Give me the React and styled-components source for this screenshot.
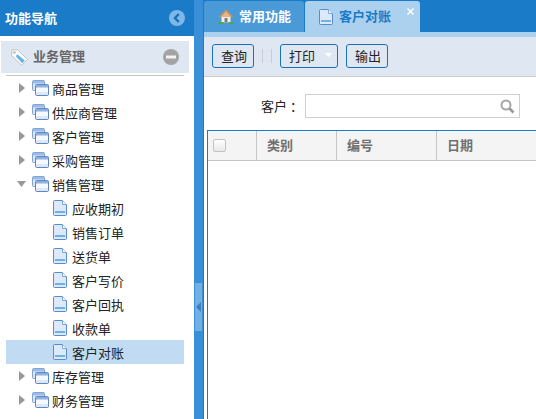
import React from 'react';
import styled, { createGlobalStyle } from 'styled-components';

const Global = createGlobalStyle`
  html, body { margin: 0; padding: 0; background: #fff; overflow: hidden; }
  * { box-sizing: border-box; }
  body { font-family: "Noto Sans CJK SC", "Liberation Sans", sans-serif; font-size: 13px; color: #222; }
`;

const Page = styled.div`display: flex; height: 100vh; overflow: hidden; background: #fff;`;
const Sidebar = styled.aside`width: 194px; flex: none; display: flex; flex-direction: column;`;
const SideHeader = styled.header`
  height: 36px; background: #1a7cc9; color: #fff; font-weight: 700; font-size: 13px;
  display: flex; align-items: center; justify-content: space-between; padding: 0 9px 0 5px;
`;
const Raised = styled.span`margin-bottom: 2px;`;
const Accordion = styled.div`
  margin: 5px 5px 0 1px; height: 32px; background: #dfe8f2; display: flex; align-items: center;
  padding: 0 10px 0 10px; color: #666; font-weight: 700; font-size: 13px;
`;
const AccordionTitle = styled.span`flex: 1; margin-left: 5px; margin-bottom: 3px;`;
const Tree = styled.ul`
  list-style: none; margin: 2px 10px 0 6px; padding: 0; border-top: 1px solid #c4c4c4;
`;
const Row = styled.li`
  height: 24px; display: flex; align-items: center; font-size: 13px; color: #222;
  padding-left: ${p => (p.$child ? 47 : 13)}px;
  background: ${p => (p.$selected ? '#c1dcf2' : 'transparent')};
`;
const Arrow = styled.span`
  width: 13px; flex: none; display: flex; align-items: center;
`;
const RowLabel = styled.span`margin-left: ${p => (p.$child ? 5 : 3)}px;`;
const Splitter = styled.div`
  width: 10px; flex: none; background: #3a90d8; border-right: 1px solid #1a7cc9;
  display: flex; align-items: center; justify-content: center; padding-left: 1px; padding-right: 1px;
`;
const SplitHandle = styled.div`
  width: 7px; height: 48px; margin-top: 195px; background: #74afe3; display: flex; align-items: center; justify-content: center;
`;
const Main = styled.main`flex: 1; min-width: 0; display: flex; flex-direction: column;`;
const TabBar = styled.div`
  height: 37px; flex: none; display: flex; align-items: flex-start; padding-top: 1px;
  background: linear-gradient(#1a7cc9 0 32px, #acd1ee 32px);
`;
const Tab = styled.div`
  position: relative; display: flex; align-items: center; font-weight: 700; font-size: 13px;
  width: ${p => p.$w}px; height: ${p => (p.$active ? 36 : 31)}px;
  padding-left: 14px; padding-bottom: ${p => (p.$active ? 5 : 0)}px;
  margin-left: ${p => (p.$active ? 1 : 0)}px;
  background: ${p => (p.$active ? '#acd1ee' : '#4a9ad8')};
  color: ${p => (p.$active ? '#1a7cc9' : '#fff')};
  border-radius: 3px 3px 0 0;
`;
const TabLabel = styled.span`margin-left: ${p => p.$ml}px; margin-bottom: 2px;`;
const CloseMark = styled.svg`position: absolute; top: 7px; right: 6px;`;
const Toolbar = styled.div`
  height: 40px; flex: none; background: #dfe8f2; border-bottom: 1px solid #cccccc;
  display: flex; align-items: center; padding: 0 0 1px 8px;
`;
const Button = styled.button`
  height: 24px; width: ${p => p.$w}px; margin-right: ${p => p.$mr || 0}px; font: inherit; font-size: 13px; color: #222;
  border: 1px solid #1b6fb6; border-radius: 3px; background: transparent; padding: 0 0 2px 8px;
  display: flex; align-items: center; gap: 10px;
`;
const Separator = styled.span`width: 1px; height: 14px; background: #c9ced3; margin-right: ${p => p.$mr}px;`;
const SearchRow = styled.div`
  height: 53px; flex: none; display: flex; align-items: flex-start; padding: 17px 16px 0 57px;
`;
const SearchLabel = styled.label`width: 44px; line-height: 23px; font-size: 13px; white-space: nowrap;`;
const SearchBox = styled.div`
  width: 215px; height: 24px; border: 1px solid #cfcfcf; display: flex; align-items: center; justify-content: flex-end; padding-right: 4px;
`;
const Grid = styled.div`
  flex: 1; margin-left: 3px; border-left: 1px solid #1a7cc9; border-top: 1px solid #1a7cc9;
`;
const GridHead = styled.div`
  height: 30px; background: #f4f4f4; border-bottom: 1px solid #c4c4c4; display: flex;
`;
const HeadCell = styled.div`
  width: ${p => p.$w}px; flex: none; border-right: 1px solid #c4c4c4; display: flex; align-items: center;
  padding: 0 0 2px ${p => p.$pl}px; font-weight: 700; font-size: 13px; color: #707070;
`;
const LastCell = styled(HeadCell)`border-right: 0; flex: 1;`;
const Check = styled.span`
  width: 13px; height: 13px; margin-top: 2px; border: 1px solid #c2c2c2; border-radius: 2px; background: linear-gradient(#fff, #e9e9e9);
`;

const Folder = () => (
  <svg width="17" height="16" viewBox="0 0 17 16">
    <rect x="0.5" y="0.5" width="12" height="10" rx="1" fill="#dce8f7" stroke="#7fa3d6" />
    <rect x="1" y="1" width="11" height="2.5" fill="#9dbbe6" />
    <rect x="3.5" y="4.5" width="13" height="11" rx="1" fill="#f6f9fd" stroke="#5f86c4" />
    <rect x="4" y="5" width="12" height="2.5" fill="#8fb0e2" />
    <rect x="4" y="12" width="12" height="3" fill="#dbe7f6" />
  </svg>
);
const Doc = () => (
  <svg width="14" height="16" viewBox="0 0 14 16">
    <path d="M.5 1.5a1 1 0 0 1 1-1h8l4 4v10a1 1 0 0 1-1 1h-11a1 1 0 0 1-1-1z" fill="#dbe9fb" stroke="#5b8cc9" />
    <path d="M9.5 .5v4h4" fill="#fff" stroke="#7ea6d8" />
    <rect x="2" y="11" width="10" height="2" fill="#6fb2e6" />
  </svg>
);
const Closed = () => (
  <svg width="6" height="10" viewBox="0 0 6 10"><path d="M0 0l6 5-6 5z" fill="#989898" /></svg>
);
const Open = () => (
  <svg width="9" height="6" viewBox="0 0 9 6" style={{ marginLeft: -2 }}><path d="M0 0h9L4.5 6z" fill="#989898" /></svg>
);

const items = [
  { t: '商品管理' }, { t: '供应商管理' }, { t: '客户管理' }, { t: '采购管理' },
  { t: '销售管理', open: true },
  { t: '应收期初', c: 1 }, { t: '销售订单', c: 1 }, { t: '送货单', c: 1 }, { t: '客户写价', c: 1 },
  { t: '客户回执', c: 1 }, { t: '收款单', c: 1 }, { t: '客户对账', c: 1, s: 1 },
  { t: '库存管理' }, { t: '财务管理' },
];

export default function App() {
  return (
    <Page>
      <Global />
      <Sidebar>
        <SideHeader>
          <Raised>功能导航</Raised>
          <svg width="16" height="16" viewBox="0 0 16 16">
            <circle cx="8" cy="8" r="8" fill="#7db8e8" />
            <path d="M9.8 4L6 8l3.8 4" fill="none" stroke="#1a6fb8" strokeWidth="2.4" />
          </svg>
        </SideHeader>
        <Accordion>
          <svg width="17" height="17" viewBox="0 0 17 17">
            <path d="M.8.8h5.7l10 9.5-6 6L.8 6.5z" fill="#fbfbfb" stroke="#c4c4c4" />
            <path d="M6.2 5.2l7.6 6.4-2.6 2.6-6.4-7z" fill="#62b4ea" />
            <circle cx="3.5" cy="3.5" r="1.2" fill="#b5b5b5" />
          </svg>
          <AccordionTitle>业务管理</AccordionTitle>
          <svg width="16" height="16" viewBox="0 0 16 16">
            <circle cx="8" cy="8" r="8" fill="#a3a3a3" />
            <rect x="3" y="6.5" width="10" height="3" fill="#f2f2f2" />
          </svg>
        </Accordion>
        <Tree>
          {items.map(i => (
            <Row key={i.t} $child={i.c} $selected={i.s}>
              {!i.c && <Arrow>{i.open ? <Open /> : <Closed />}</Arrow>}
              {i.c ? <Doc /> : <Folder />}
              <RowLabel $child={i.c}>{i.t}</RowLabel>
            </Row>
          ))}
        </Tree>
      </Sidebar>
      <Splitter>
        <SplitHandle>
          <svg width="5" height="10" viewBox="0 0 5 10"><path d="M5 0L0 5l5 5z" fill="#3f7fc0" /></svg>
        </SplitHandle>
      </Splitter>
      <Main>
        <TabBar>
          <Tab $w={100}>
            <svg width="16" height="15" viewBox="0 0 16 15">
              <path d="M8 .5L.5 8h15z" fill="#c9925a" />
              <path d="M8 2.5L3 8h10z" fill="#e5b684" />
              <rect x="3.5" y="8" width="9" height="5.5" fill="#f2efe8" />
              <rect x="6.5" y="9" width="3" height="4.5" fill="#7d7d7d" />
              <rect x="0.5" y="13" width="5" height="2" fill="#4ca64c" />
              <rect x="10.5" y="13" width="5" height="2" fill="#4ca64c" />
            </svg>
            <TabLabel $ml={5}>常用功能</TabLabel>
          </Tab>
          <Tab $w={115} $active>
            <Doc />
            <TabLabel $ml={6}>客户对账</TabLabel>
            <CloseMark width="7" height="7" viewBox="0 0 7 7">
              <path d="M.5.5l6 6M6.5.5l-6 6" stroke="#fff" strokeWidth="1.5" />
            </CloseMark>
          </Tab>
        </TabBar>
        <Toolbar>
          <Button $w={42} $mr={8}>查询</Button>
          <Separator $mr={8} />
          <Separator $mr={8} />
          <Button $w={58} $mr={8}>
            打印
            <svg width="7" height="4" viewBox="0 0 7 4"><path d="M0 0h7L3.5 4z" fill="#fff" /></svg>
          </Button>
          <Button $w={42}>输出</Button>
        </Toolbar>
        <SearchRow>
          <SearchLabel>客户 ：</SearchLabel>
          <SearchBox>
            <svg width="15" height="15" viewBox="0 0 15 15">
              <circle cx="6" cy="6" r="4.5" fill="none" stroke="#a6a6a6" strokeWidth="2" />
              <path d="M9.5 9.5l4 4" stroke="#999" strokeWidth="2.6" />
            </svg>
          </SearchBox>
        </SearchRow>
        <Grid>
          <GridHead>
            <HeadCell $w={49} $pl={5}><Check /></HeadCell>
            <HeadCell $w={80} $pl={10}>类别</HeadCell>
            <HeadCell $w={100} $pl={10}>编号</HeadCell>
            <LastCell $pl={10}>日期</LastCell>
          </GridHead>
        </Grid>
      </Main>
    </Page>
  );
}
